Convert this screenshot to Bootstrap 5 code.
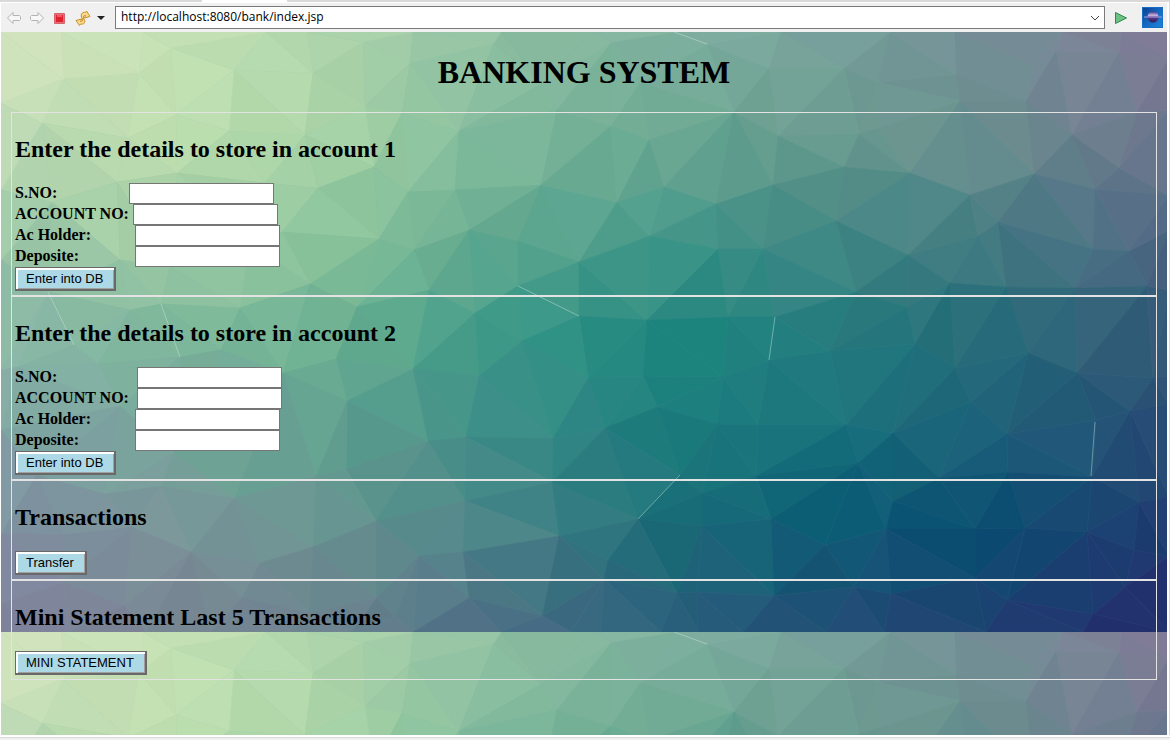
<!DOCTYPE html>
<html lang="en">
<head>
<meta charset="utf-8">
<meta name="viewport" content="width=device-width, initial-scale=1">
<title>Banking System</title>
<link href="https://cdn.jsdelivr.net/npm/bootstrap@5.3.0/dist/css/bootstrap.min.css" rel="stylesheet">
<style>
body { background: #fff; color: #000; font-family: "Liberation Serif", serif; font-size: 16px; }
.top-edge { height: 2px; background: #d9d9d9; padding-left: 202px; }
.top-edge span { display: block; width: 85px; height: 2px; background: #fff; }
.browser { border-left: 1px solid #fff; border-right: 1px solid #d9d9d9; }
.toolbar { background: #f0f0f0; height: 29px; margin: 1px 2px 0 0; padding: 0 4px 0 5px; }
.tool { border: 0; background: none; padding: 0; width: 16px; height: 16px; display: block; flex: none; }
.tool + .tool { margin-left: 7px; }
.tool.tool-menu { margin-left: 2px; }
.tool svg { display: block; }
.address { height: 23px; border: 1px solid #7a7a7a; background: #fff; margin: 0 9px 0 6px; }
.address input { border: 0; outline: 0; padding: 0 0 1px 5px; min-width: 0; color: #000; font: 12px/18px "Open Sans", sans-serif; }
.address .tool { width: 18px; padding-left: 4px; }
.page-area { margin-right: 2px; padding: 24px 10px 8px; isolation: isolate; }
.mesh { position: absolute; inset: 0; width: 100%; height: 100%; z-index: -1; }
.page-area h1 { font-size: 32px; line-height: 32px; font-weight: 700; margin: 0 0 24px; }
.panel { border: 1px solid #e3e3e3; padding: 22px 3px 4px; }
.panel h2 { font-size: 24px; line-height: 28px; font-weight: 700; margin: 0 0 20px; }
.field label { font-weight: 700; line-height: 20px; white-space: nowrap; }
.field input { width: 145px; height: 21px; border: 1px solid #767676; border-radius: 0; background: #fff; padding: 1px 2px; font: 13px "Liberation Sans", sans-serif; }
.w-a { width: 114px; } .w-b { width: 118px; } .w-c { width: 120px; } .w-d { width: 122px; }
.action { display: block; height: 24px; border: 1px solid #696969; border-width: 1px 2px 2px 1px; padding: 0 11px 0 10px; background: #add8e6; color: #000; font: 13px/20px "Liberation Sans", sans-serif; box-shadow: inset 2px 2px #fff, inset -1px -1px #a0a0a0; }
.bottom-edge { height: 5px; border-top: 2px solid #fff; background: linear-gradient(#d9d9d9 1px, #f0f0f0 1px); }
</style>
</head>
<body class="d-flex flex-column min-vh-100">
<div class="top-edge"><span></span></div>
<div class="browser d-flex flex-column flex-grow-1">
  <header class="toolbar d-flex align-items-center">
    <button class="tool" aria-label="Back"><svg width="16" height="16"><path d="M1.500 8 7 2.500V5.500H13.500L14.500 6.500V9.500L13.500 10.500H7V13.500Z" fill="#f7f7f7" stroke="#b4b4b4" stroke-linejoin="round"/></svg></button>
    <button class="tool" aria-label="Forward"><svg width="16" height="16"><path d="M14.500 8 9 2.500V5.500H2.500L1.500 6.500V9.500L2.500 10.500H9V13.500Z" fill="#f7f7f7" stroke="#b4b4b4" stroke-linejoin="round"/></svg></button>
    <button class="tool" aria-label="Stop"><svg width="16" height="16"><rect x="2" y="3" width="11" height="11" rx="1" fill="#d5636b"/><rect x="3.500" y="4.500" width="8" height="8" fill="#e0222f" stroke="#ea6b73"/><path d="M5 6H10" stroke="#ef5a64" stroke-width="2"/></svg></button>
    <button class="tool" aria-label="Refresh"><svg width="16" height="16"><g fill="#fbdc8c" stroke="#c98f2c" stroke-linejoin="round"><path d="M7 8.500C5 5 7 1.500 10.500 2.500L11.500 1 15 6.500 9.500 8 10.500 5.500C8.500 5 8 6.500 9 8Z"/><path d="M9 9C11 12 9 15 5.500 14L4.500 15.500 1 10.500 6.500 9 5.500 11.500C7.500 12 8 10.500 7 9Z"/></g></svg></button>
    <button class="tool tool-menu" aria-label="Refresh options"><svg width="16" height="16"><path d="M4 6H12L8 10Z" fill="#222"/></svg></button>
    <div class="address d-flex align-items-center flex-grow-1">
      <input class="flex-grow-1" type="text" aria-label="Address" value="http://localhost:8080/bank/index.jsp">
      <button class="tool" aria-label="Show history"><svg width="10" height="16"><path d="M1 6 5 10 9 6" fill="none" stroke="#444"/></svg></button>
    </div>
    <button class="tool" aria-label="Go"><svg width="16" height="16"><path d="M1.500 2.500 12.500 8 1.500 13.500Z" fill="#6cc285" stroke="#2e8b45" stroke-linejoin="round"/></svg></button>
    <svg class="ms-2 flex-shrink-0" width="25" height="21" aria-hidden="true">
      <defs><linearGradient id="tileBlue" x2="1" y2="1"><stop stop-color="#0b3f92"/><stop offset=".5" stop-color="#1668c0"/><stop offset="1" stop-color="#1c86dc"/></linearGradient><linearGradient id="globe" x2="0" y2="1"><stop stop-color="#4a2f78"/><stop offset=".35" stop-color="#c9b8e8"/><stop offset=".5" stop-color="#5b4090"/><stop offset="1" stop-color="#2b1b55"/></linearGradient></defs>
      <rect x="4.500" y=".5" width="20" height="20" fill="url(#tileBlue)" stroke="#176fc4"/><circle cx="15" cy="10" r="5.500" fill="url(#globe)"/><path d="M6 10H24" stroke="#a99bdc"/>
    </svg>
  </header>

  <main class="page-area position-relative flex-grow-1">
    <svg class="mesh" aria-hidden="true">
      <defs><pattern id="lowPoly" width="1168" height="600" patternUnits="userSpaceOnUse"></pattern></defs>
      <rect width="100%" height="100%" fill="url(#lowPoly)"/>
    </svg>
    <h1 class="text-center">BANKING SYSTEM</h1>

    <form class="panel">
      <h2>Enter the details to store in account 1</h2>
      <div class="field d-flex"><label class="w-a" for="sno1">S.NO:</label><input id="sno1" type="text"></div>
      <div class="field d-flex"><label class="w-b" for="acc1">ACCOUNT NO:</label><input id="acc1" type="text"></div>
      <div class="field d-flex"><label class="w-c" for="holder1">Ac Holder:</label><input id="holder1" type="text"></div>
      <div class="field d-flex"><label class="w-c" for="dep1">Deposite:</label><input id="dep1" type="text"></div>
      <button class="action" type="button">Enter into DB</button>
    </form>
    <form class="panel">
      <h2>Enter the details to store in account 2</h2>
      <div class="field d-flex"><label class="w-d" for="sno2">S.NO:</label><input id="sno2" type="text"></div>
      <div class="field d-flex"><label class="w-d" for="acc2">ACCOUNT NO:</label><input id="acc2" type="text"></div>
      <div class="field d-flex"><label class="w-c" for="holder2">Ac Holder:</label><input id="holder2" type="text"></div>
      <div class="field d-flex"><label class="w-c" for="dep2">Deposite:</label><input id="dep2" type="text"></div>
      <button class="action" type="button">Enter into DB</button>
    </form>
    <form class="panel">
      <h2>Transactions</h2>
      <button class="action" type="button">Transfer</button>
    </form>
    <form class="panel">
      <h2>Mini Statement Last 5 Transactions</h2>
      <button class="action" type="button">MINI STATEMENT</button>
    </form>
  </main>
</div>
<div class="bottom-edge"></div>

<script src="https://cdn.jsdelivr.net/npm/bootstrap@5.3.0/dist/js/bootstrap.bundle.min.js"></script>
<script>
// Low-poly background tile: mesh corners, triangulated, each triangle tinted from a colour grid.
const TOP = 32, W = 1168, H = 600;
const corners = `62,79 138,73 170,48 233,70 312,73 362,42 364,106 409,63 493,43 401,113 458,131 540,84 556,110 304,135 228,131 175,115 127,138 41,123
176,173 116,182 51,202 264,183 317,188 373,167 407,192 454,190 540,185 468,230 517,241 378,239 413,250 281,232 309,284 248,243 239,308 119,260 169,267 160,304 129,310 47,292 356,307 428,290 474,313 517,286 578,262 578,316
611,42 706,44 639,83 768,68 843,68 877,82 955,74 1030,65 1055,51 1118,52 733,112 777,136 858,134 877,128 959,101 1025,101 1071,135 1136,112 610,126 648,140 663,187 616,202 715,204 772,185 843,167 909,173 969,195 1033,174 1094,189 1118,168 649,236 717,249 762,249 835,221 907,255 977,236 997,222 1092,249 1128,251 646,320 727,317 774,317 855,292 906,307 949,283 1005,287 1074,288 1146,286
73,345 97,364 220,350 179,357 335,359 412,369 478,376 521,341 346,401 282,373 119,406 17,367 427,441 465,437 552,438 345,469 315,476 233,498 159,486 104,494 35,475 172,452 63,535 131,527 190,552 259,563 312,547 375,521 464,501 551,482 418,556 462,552 558,536 468,598 375,598 541,616 394,617 241,598 123,606 63,582 308,613
587,378 642,376 722,377 768,360 829,351 914,344 954,368 1027,353 1076,373 1152,378 604,428 656,407 716,424 757,425 845,425 892,433 970,402 1006,434 1095,420 1129,411 857,463 755,476 679,475 637,519 701,493 701,526 770,519 892,501 938,478 1007,472 1091,477 1138,502 885,529 974,529 1024,528 1086,532 1133,550 824,545 603,579 607,560 676,593 696,592 773,596 853,587 890,594 974,578 1006,600 1092,614 1124,587
0,32 60,32 142,32 265,32 306,32 412,32 500,32 590,32 673,32 780,32 889,32 953,32 1062,32 1121,32 1168,32 0,103 0,190 0,260 0,370 0,430 0,533 0,603 0,632 1168,58 1168,110 1168,195 1168,230 1168,290 1168,376 1168,404 1168,497 1168,556 1168,632
68,632 145,632 210,632 290,632 350,632 412,632 500,632 570,632 600,632 660,632 697,632 742,632 825,632 883,632 985,632 1082,632`
  .trim().split(/\s+/).map(p => { const [x, y] = p.split(',').map(Number); return [x, y - TOP]; });

const grid = [
  'd8e4c0 c5e1b4 aed4ac 90c0a2 80b1a0 769e9a 758e98 847a98',
  'bedab4 c0e0b0 a8d4a6 7eb89b 6eaa93 6b9c90 6a8b8d 707790',
  '9cc8a8 a9d1a7 8cc49c 64aa90 46988a 438784 497d84 516684',
  '8cb8a8 7eb89c 6cb090 3a9888 1f8880 237a7c 286a79 355a78',
  '80a4a4 78a89c 60a090 3c8c88 1c7c7c 16707c 1c5e78 294c75',
  '808ca0 7b959a 6a9492 4a8488 1a6c78 0a5974 0a4c72 203a70',
  '80809c 7a8494 6c808e 4a6c84 2a5c7a 244c76 203c70 262a6e'
].map(r => r.split(' ').map(h => [0, 2, 4].map(i => parseInt(h.substr(i, 2), 16))));

function colourAt(x, y, shade) {
  const gx = Math.min(x / W * 7, 6.99), gy = Math.min(y / H * 6, 5.99);
  const i = Math.floor(gx), j = Math.floor(gy), u = gx - i, v = gy - j;
  return 'rgb(' + [0, 1, 2].map(k => Math.max(0, Math.round(
    (grid[j][i][k] * (1 - u) + grid[j][i + 1][k] * u) * (1 - v) +
    (grid[j + 1][i][k] * (1 - u) + grid[j + 1][i + 1][k] * u) * v + shade))) + ')';
}

function circle(a, b, c) {
  const d = 2 * (a[0] * (b[1] - c[1]) + b[0] * (c[1] - a[1]) + c[0] * (a[1] - b[1]));
  const [A, B, C] = [a, b, c].map(p => p[0] * p[0] + p[1] * p[1]);
  const x = (A * (b[1] - c[1]) + B * (c[1] - a[1]) + C * (a[1] - b[1])) / d;
  const y = (A * (c[0] - b[0]) + B * (a[0] - c[0]) + C * (b[0] - a[0])) / d;
  return { pts: [a, b, c], x, y, r: (a[0] - x) ** 2 + (a[1] - y) ** 2 };
}

const frame = [[-9000, -8000], [11000, -8100], [1000, 12000]];
let tris = [circle(...frame)];
corners.forEach((p, n) => {
  const q = [p[0] + (n * 7 % 11) / 1e4, p[1] + (n * 5 % 13) / 1e4];
  const edges = new Map(), id = e => e.map(v => v.join()).sort().join('|');
  tris = tris.filter(t => {
    if ((q[0] - t.x) ** 2 + (q[1] - t.y) ** 2 >= t.r) return true;
    [[0, 1], [1, 2], [2, 0]].forEach(([i, j]) => {
      const e = [t.pts[i], t.pts[j]], k = id(e);
      edges.has(k) ? edges.delete(k) : edges.set(k, e);
    });
    return false;
  });
  edges.forEach(e => tris.push(circle(e[0], e[1], q)));
});

let art = `<rect width="${W}" height="${H}" fill="#6ba294"/>`;
tris.filter(t => !t.pts.some(p => frame.includes(p))).forEach(t => {
  const cx = (t.pts[0][0] + t.pts[1][0] + t.pts[2][0]) / 3, cy = (t.pts[0][1] + t.pts[1][1] + t.pts[2][1]) / 3;
  const c = colourAt(cx, cy, Math.round(cx * 13 + cy * 7) % 5 - 2);
  art += `<polygon points="${t.pts.map(p => p[0].toFixed(1) + ',' + p[1].toFixed(1)).join(' ')}" fill="${c}" stroke="${c}" stroke-width=".6"/>`;
});
// pale hairline cracks between some facets
[[517,286,578,316],[774,317,768,360],[1094,422,1090,476],[679,475,637,519],[673,32,706,44],[47,292,73,345],[160,304,179,357]].forEach(l => {
  art += `<line x1="${l[0]}" y1="${l[1] - TOP}" x2="${l[2]}" y2="${l[3] - TOP}" stroke="#d8f0e8" stroke-opacity=".5" stroke-width=".8"/>`;
});
document.getElementById('lowPoly').innerHTML = art;
</script>
</body>
</html>
